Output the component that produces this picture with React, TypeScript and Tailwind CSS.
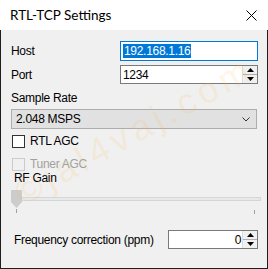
import React from "react";

function Spinner() {
  return (
    <div className="flex flex-col w-[15px] h-full bg-[#f0f0f0] border-l border-[#dcdcdc]">
      <div className="flex-1 flex items-center justify-center border-b border-[#adadad]">
        <svg width="7" height="4" viewBox="0 0 7 4">
          <polygon points="3.5,0 7,4 0,4" fill="#000" />
        </svg>
      </div>
      <div className="flex-1 flex items-center justify-center">
        <svg width="7" height="4" viewBox="0 0 7 4">
          <polygon points="0,0 7,0 3.5,4" fill="#000" />
        </svg>
      </div>
    </div>
  );
}

function Checkbox({ label, disabled }: { label: string; disabled?: boolean }) {
  return (
    <div className="flex items-center h-[14px] pl-[11px] gap-[5px]">
      <div
        className={
          disabled
            ? "w-[13px] h-[13px] border border-[#cccccc] bg-[#f0f0f0]"
            : "w-[13px] h-[13px] border border-[#333333] bg-white"
        }
      />
      <span className={disabled ? "text-[#a0a0a0]" : "text-black"}>{label}</span>
    </div>
  );
}

export default function App() {
  return (
    <div
      className="relative w-[268px] h-[269px] flex flex-col overflow-hidden text-[12px] leading-[14px] tracking-[-0.3px] text-black"
      style={{ fontFamily: '"Liberation Sans", Arial, sans-serif' }}
    >
      {/* Title bar */}
      <div className="h-[30px] bg-white flex items-center justify-between pl-[10px] pr-[11px] shrink-0">
        <span className="text-[13.5px] tracking-normal" style={{ fontFamily: "Lato, sans-serif" }}>
          RTL-TCP Settings
        </span>
        <svg width="11" height="11" viewBox="0 0 11 11">
          <path d="M0.5 0.5 L10.5 10.5 M10.5 0.5 L0.5 10.5" stroke="#000" strokeWidth="1" />
        </svg>
      </div>

      {/* Body */}
      <div className="flex-1 flex flex-col bg-[#f0f0f0] border-l border-r border-b border-[#1e1e1e]">
        {/* Host */}
        <div className="mt-[11px] h-[20px] flex items-center pl-[10px] pr-[9px]">
          <span className="flex-1">Host</span>
          <div className="w-[138px] h-[20px] bg-white border border-[#0078d7] flex items-center pl-[2px]">
            <span className="bg-[#0078d7] text-white px-[1px] leading-[14px]">192.168.1.16</span>
          </div>
        </div>

        {/* Port */}
        <div className="mt-[4px] h-[19px] flex items-center pl-[10px] pr-[9px]">
          <span className="flex-1">Port</span>
          <div className="w-[138px] h-[19px] bg-white border border-[#7a7a7a] flex items-center">
            <span className="flex-1 pl-[2px]">1234</span>
            <Spinner />
          </div>
        </div>

        {/* Sample rate */}
        <div className="mt-[7px] h-[14px] pl-[10px]">Sample Rate</div>
        <div className="mt-[4px] mx-[10px] h-[20px] bg-[#e1e1e1] border border-[#adadad] flex items-center justify-between pl-[4px] pr-[6px]">
          <span>2.048 MSPS</span>
          <svg width="8" height="5" viewBox="0 0 8 5">
            <path d="M0.5 0.5 L4 4 L7.5 0.5" stroke="#333" strokeWidth="1" fill="none" />
          </svg>
        </div>

        {/* AGC */}
        <div className="mt-[5px]">
          <Checkbox label="RTL AGC" />
        </div>
        <div className="mt-[9px]">
          <Checkbox label="Tuner AGC" disabled />
        </div>

        {/* RF gain */}
        <div className="h-[14px] pl-[13px]">RF Gain</div>
        <div className="relative mt-[5px] h-[25px]">
          <div className="absolute left-[13px] right-[6px] top-[7px] h-[4px] bg-[#e7eaea] border border-[#d6d6d6]" />
          <svg className="absolute left-[10px] top-0" width="11" height="18" viewBox="0 0 11 18">
            <polygon points="0,0 11,0 11,12 5.5,18 0,12" fill="#cccccc" />
          </svg>
          <div className="absolute left-[15px] top-[19px] w-[1px] h-[4px] bg-[#a0a0a0]" />
          <div className="absolute right-[12px] top-[20px] w-[1px] h-[4px] bg-[#a0a0a0]" />
        </div>

        {/* Frequency correction */}
        <div className="mt-[15px] h-[19px] flex items-center pl-[13px] pr-[9px]">
          <span className="flex-1">Frequency correction (ppm)</span>
          <div className="w-[90px] h-[19px] bg-white border border-[#7a7a7a] flex items-center">
            <span className="flex-1 text-right pr-[1px]">0</span>
            <Spinner />
          </div>
        </div>
      </div>

      {/* Watermark */}
      <div className="pointer-events-none absolute inset-0 flex items-center justify-center">
        <span
          className="text-[36px] leading-none tracking-[5px] text-[#ffb347]/15 -rotate-[29deg] whitespace-nowrap translate-y-[-4px]"
          style={{ fontFamily: '"Liberation Sans", Arial, sans-serif' }}
        >
          ©jal4vaj.com
        </span>
      </div>
    </div>
  );
}
